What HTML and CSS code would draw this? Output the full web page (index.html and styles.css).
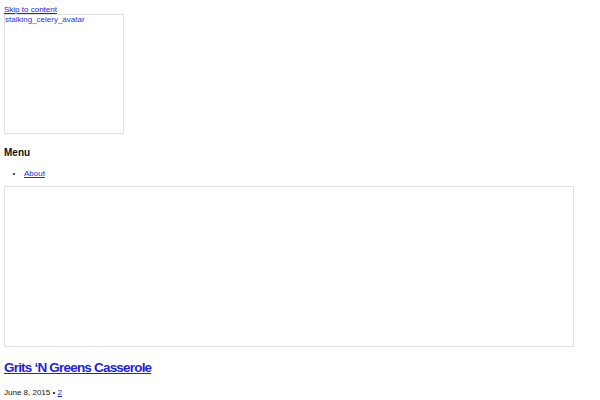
FILE: index.html
```html
<!DOCTYPE html>
<html>
<head>
<meta charset="utf-8">
<link rel="stylesheet" href="styles.css">
</head>
<body>
<a class="skip" href="#content">Skip to content</a>
<a class="avatar" href="#">stalking_celery_avatar</a>
<h2 class="menu-title">Menu</h2>
<ul class="menu">
  <li><a href="#">About</a></li>
</ul>
<div class="feature"></div>
<h1 class="post-title"><a href="#">Grits ‘N Greens Casserole</a></h1>
<p class="meta">June 8, 2015 • <a href="#">2</a></p>
</body>
</html>
```
FILE: styles.css
```css
html, body {
  margin: 0;
  padding: 0;
  background: #fff;
}
body {
  padding: 4px;
  font-family: "Liberation Sans", Arial, sans-serif;
  font-size: 8px;
  line-height: 1.15;
  color: #111;
}
a {
  color: #2222dd;
}
.skip {
  display: block;
  margin-top: 1px;
}
.avatar {
  display: block;
  box-sizing: border-box;
  width: 120px;
  height: 120px;
  border: 1px solid #e2e2e2;
  text-decoration: none;
  color: #3333cc;
}
.menu-title {
  font-size: 10px;
  font-weight: bold;
  margin: 13px 0 0;
}
.menu {
  margin: 10px 0 0;
  padding-left: 20px;
}
.feature {
  box-sizing: border-box;
  width: 570px;
  height: 161px;
  margin-top: 8px;
  border: 1px solid #e2e2e2;
}
.post-title {
  font-size: 13.5px;
  letter-spacing: -0.8px;
  margin: 13px 0 0;
}
.meta {
  margin: 13px 0 0;
}
```
